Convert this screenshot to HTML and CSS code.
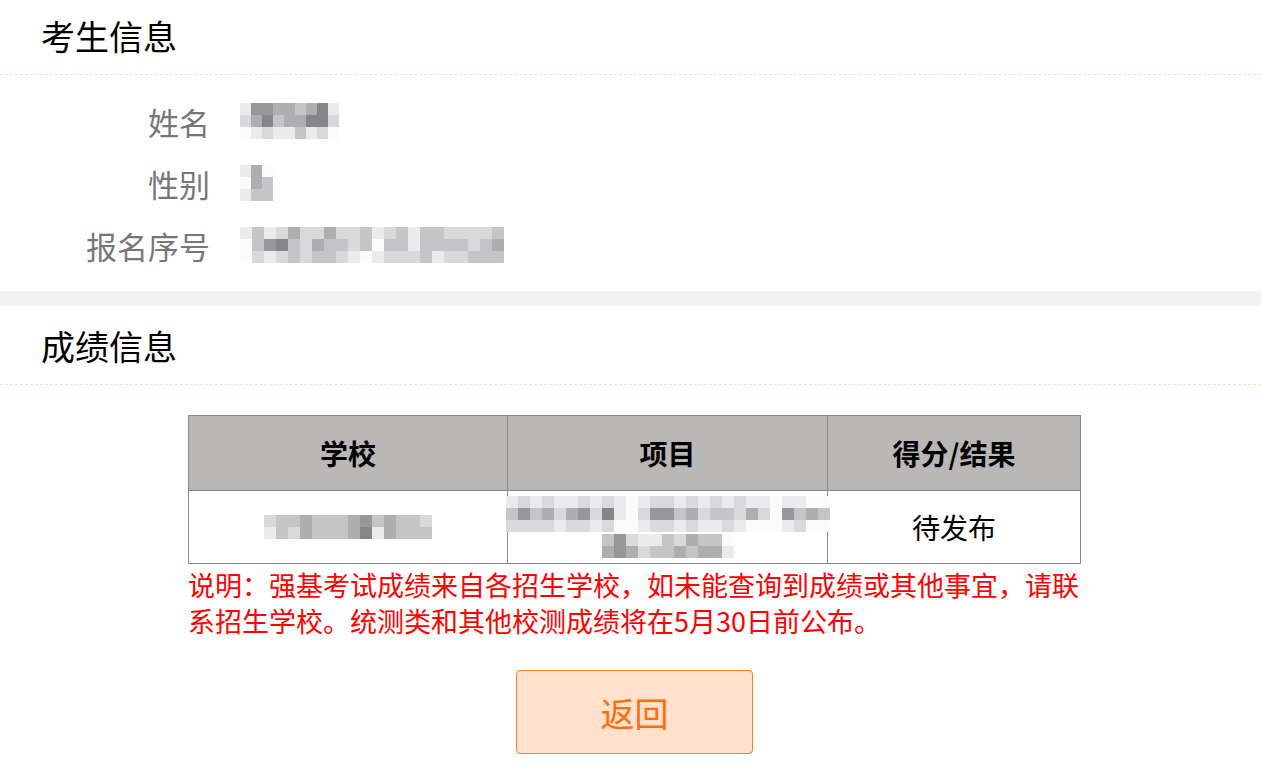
FILE: index.html
```html
<!doctype html>
<html lang="zh-CN">
	<head>
		<meta charset="utf-8">
		<title>成绩查询</title>
		<link rel="stylesheet" href="styles.css">
	</head>
	<body>
		<div class="card first">
			<h2 class="card-title">考生信息</h2>
			<div class="info">
				<div class="label">姓名</div>
				<div class="value">
					<span class="mosaic cols-9">
						<i class="a"></i><i class="e"></i><i class="e"></i><i class="d"></i><i class="d"></i><i class="c"></i><i class="d"></i><i class="f"></i><i class="a"></i>
						<i class="b"></i><i class="d"></i><i class="f"></i><i class="c"></i><i class="d"></i><i class="d"></i><i class="f"></i><i class="f"></i><i class="b"></i>
						<i class="w"></i><i class="a"></i><i class="b"></i><i class="a"></i><i class="a"></i><i class="c"></i><i class="a"></i><i class="b"></i><i class="w"></i>
					</span>
				</div>
				<div class="label">性别</div>
				<div class="value">
					<span class="mosaic cols-3">
						<i class="a"></i><i class="d"></i><i class="w"></i>
						<i class="w"></i><i class="d"></i><i class="c"></i>
						<i class="a"></i><i class="c"></i><i class="c"></i>
					</span>
				</div>
				<div class="label">报名序号</div>
				<div class="value">
					<span class="mosaic cols-22">
						<i class="a"></i><i class="c"></i><i class="a"></i><i class="b"></i><i class="d"></i><i class="b"></i><i class="b"></i><i class="d"></i><i class="b"></i><i class="b"></i><i class="c"></i><i class="a"></i><i class="b"></i><i class="c"></i><i class="a"></i><i class="c"></i><i class="c"></i><i class="b"></i><i class="b"></i><i class="b"></i><i class="b"></i><i class="c"></i>
						<i class="w"></i><i class="c"></i><i class="e"></i><i class="f"></i><i class="c"></i><i class="b"></i><i class="d"></i><i class="c"></i><i class="c"></i><i class="b"></i><i class="c"></i><i class="w"></i><i class="c"></i><i class="c"></i><i class="a"></i><i class="c"></i><i class="c"></i><i class="c"></i><i class="c"></i><i class="b"></i><i class="c"></i><i class="d"></i>
						<i class="w"></i><i class="b"></i><i class="a"></i><i class="b"></i><i class="c"></i><i class="b"></i><i class="c"></i><i class="c"></i><i class="b"></i><i class="a"></i><i class="w"></i><i class="a"></i><i class="b"></i><i class="b"></i><i class="b"></i><i class="c"></i><i class="a"></i><i class="b"></i><i class="b"></i><i class="c"></i><i class="c"></i><i class="c"></i>
					</span>
				</div>
			</div>
		</div>

		<div class="band"></div>

		<div class="card">
			<h2 class="card-title">成绩信息</h2>
			<div class="result">
				<table class="scores">
					<thead>
						<tr>
							<th class="col-school">学校</th>
							<th class="col-item">项目</th>
							<th>得分/结果</th>
						</tr>
					</thead>
					<tbody>
						<tr>
							<td>
								<span class="mosaic cols-14">
									<i class="b"></i><i class="c"></i><i class="c"></i><i class="d"></i><i class="c"></i><i class="c"></i><i class="c"></i><i class="d"></i><i class="e"></i><i class="c"></i><i class="d"></i><i class="c"></i><i class="c"></i><i class="b"></i>
									<i class="a"></i><i class="c"></i><i class="b"></i><i class="d"></i><i class="c"></i><i class="c"></i><i class="c"></i><i class="d"></i><i class="f"></i><i class="a"></i><i class="d"></i><i class="c"></i><i class="c"></i><i class="c"></i>
								</span>
							</td>
							<td>
								<span class="mosaic cols-27">
									<i class="a"></i><i class="b"></i><i class="a"></i><i class="b"></i><i class="a"></i><i class="a"></i><i class="b"></i><i class="a"></i><i class="b"></i><i class="a"></i><i class="w"></i><i class="a"></i><i class="b"></i><i class="b"></i><i class="a"></i><i class="b"></i><i class="a"></i><i class="b"></i><i class="a"></i><i class="b"></i><i class="a"></i><i class="a"></i><i class="w"></i><i class="a"></i><i class="a"></i><i class="w"></i><i class="w"></i>
									<i class="c"></i><i class="e"></i><i class="c"></i><i class="d"></i><i class="b"></i><i class="d"></i><i class="e"></i><i class="b"></i><i class="f"></i><i class="a"></i><i class="w"></i><i class="b"></i><i class="e"></i><i class="e"></i><i class="c"></i><i class="d"></i><i class="b"></i><i class="c"></i><i class="c"></i><i class="b"></i><i class="d"></i><i class="b"></i><i class="w"></i><i class="e"></i><i class="c"></i><i class="d"></i><i class="c"></i>
									<i class="b"></i><i class="b"></i><i class="b"></i><i class="b"></i><i class="a"></i><i class="b"></i><i class="b"></i><i class="a"></i><i class="b"></i><i class="w"></i><i class="w"></i><i class="a"></i><i class="b"></i><i class="b"></i><i class="a"></i><i class="b"></i><i class="a"></i><i class="a"></i><i class="b"></i><i class="a"></i><i class="w"></i><i class="w"></i><i class="w"></i><i class="a"></i><i class="b"></i><i class="w"></i><i class="w"></i>
								</span>
								<span class="mosaic cols-11 second">
									<i class="c"></i><i class="e"></i><i class="b"></i><i class="a"></i><i class="a"></i><i class="c"></i><i class="b"></i><i class="d"></i><i class="c"></i><i class="c"></i><i class="w"></i>
									<i class="d"></i><i class="e"></i><i class="d"></i><i class="b"></i><i class="c"></i><i class="c"></i><i class="d"></i><i class="c"></i><i class="d"></i><i class="d"></i><i class="a"></i>
								</span>
							</td>
							<td>待发布</td>
						</tr>
					</tbody>
				</table>
				<p class="note">说明：强基考试成绩来自各招生学校，如未能查询到成绩或其他事宜，请联系招生学校。统测类和其他校测成绩将在5月30日前公布。</p>
				<div class="actions">
					<button class="btn-back" type="button">返回</button>
				</div>
			</div>
		</div>
	</body>
</html>
```

FILE: styles.css
```css
html {
	overflow: hidden;
}

body {
	margin: 0;
	background: #fff;
	font-family: "Microsoft YaHei", "Noto Sans CJK SC", "Noto Sans", sans-serif;
	color: #000;
}

.card {
	background: #fff;
}

.card.first {
	margin-top: -4px;
}

.card-title {
	margin: 0;
	height: 78px;
	padding-left: 41px;
	display: flex;
	align-items: center;
	font-size: 34px;
	font-weight: normal;
	border-bottom: 1px dashed #ffdcbc;
}

.info {
	display: grid;
	grid-template-columns: 210px 1fr;
	grid-auto-rows: 62px;
	column-gap: 30px;
	align-items: center;
	padding: 15px 0 15px;
}

.label {
	text-align: right;
	font-size: 31px;
	color: #777;
	line-height: 1;
}

.value {
	display: flex;
	align-items: center;
}

.band {
	height: 15px;
	background: #f2f2f2;
}

/* pixelated (redacted) values */
.mosaic {
	display: inline-grid;
	grid-auto-rows: 12px;
	vertical-align: middle;
}
.mosaic i {
	display: block;
}
.cols-3 { grid-template-columns: repeat(3, 11px); }
.cols-9 { grid-template-columns: repeat(9, 11px); }
.cols-11 { grid-template-columns: repeat(11, 12px); }
.cols-14 { grid-template-columns: repeat(14, 12px); }
.cols-22 { grid-template-columns: repeat(22, 12px); }
.cols-27 { grid-template-columns: repeat(27, 12px); }

.mosaic .w { background: #fbfbfb; }
.mosaic .a { background: #ebebed; }
.mosaic .b { background: #d9d9db; }
.mosaic .c { background: #c5c5c8; }
.mosaic .d { background: #aeaeb0; }
.mosaic .e { background: #979799; }
.mosaic .f { background: #858688; }

.result {
	margin-left: 188px;
	width: 893px;
	padding-top: 30px;
}

.scores {
	width: 100%;
	border-collapse: collapse;
	table-layout: fixed;
}

.scores th,
.scores td {
	border: 1px solid #888;
	text-align: center;
	padding: 0;
}

.scores th {
	height: 74px;
	background: #bab8b6;
	font-size: 28px;
	font-weight: bold;
}

.scores td {
	height: 72px;
	font-size: 28px;
}

.col-school { width: 318px; }
.col-item { width: 319px; }

.scores td .mosaic {
	display: grid;
	justify-content: center;
}
.scores td .mosaic.second {
	margin-top: 2px;
}

.note {
	margin: 3px 0 0;
	font-size: 27px;
	line-height: 36px;
	color: #f00;
}

.actions {
	display: flex;
	justify-content: center;
	padding-top: 31px;
}

.btn-back {
	width: 237px;
	height: 84px;
	background: #ffe1cc;
	border: 1px solid #ff7d1e;
	border-radius: 4px;
	font-family: inherit;
	font-size: 34px;
	color: #ff6d0a;
	cursor: pointer;
}
```
